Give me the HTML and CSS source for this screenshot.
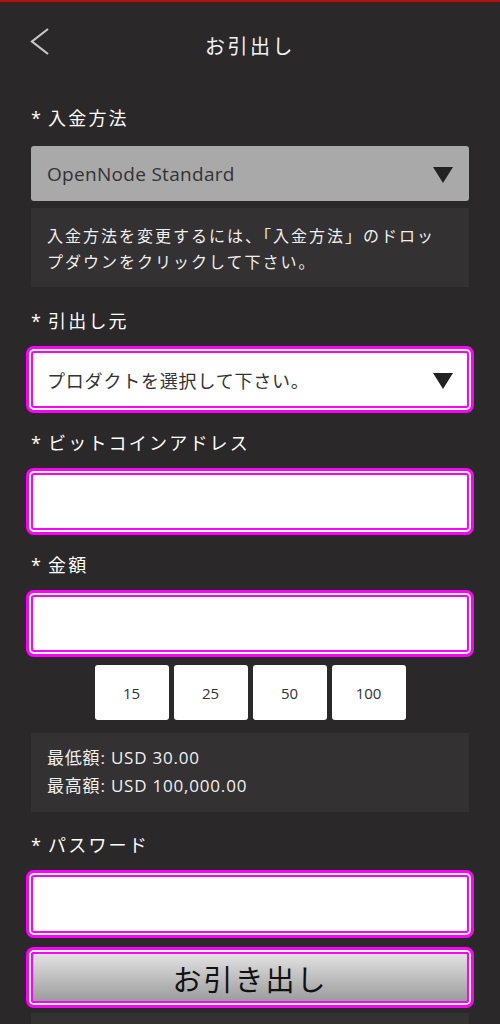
FILE: index.html
```html
<!DOCTYPE html>
<html lang="ja">
<head>
    <meta charset="UTF-8">
    <meta name="viewport" content="width=device-width, initial-scale=1.0">
    <title>お引出し</title>
    <link rel="stylesheet" href="styles.css">
</head>
<body>
    <div class="header">
        <a href="#" class="back">
            <svg width="20" height="28" viewBox="0 0 20 28"><polyline points="18,1 2,13.5 18,26" fill="none" stroke="#c8c8c8" stroke-width="2.2"/></svg>
        </a>
        <div class="title">お引出し</div>
        <div></div>
    </div>

    <div class="form">
        <div class="label">* 入金方法</div>
        <div class="select grey">
            <span>OpenNode Standard</span>
            <svg class="arrow" width="20" height="16" viewBox="0 0 20 16"><polygon points="0,0 20,0 10,16" fill="#222"/></svg>
        </div>
        <div class="note">入金方法を変更するには、「入金方法」のドロップダウンをクリックして下さい。</div>

        <div class="label">* 引出し元</div>
        <div class="field select">
            <span>プロダクトを選択して下さい。</span>
            <svg class="arrow" width="20" height="16" viewBox="0 0 20 16"><polygon points="0,0 20,0 10,16" fill="#222"/></svg>
        </div>

        <div class="label">* ビットコインアドレス</div>
        <input class="field" type="text">

        <div class="label">* 金額</div>
        <input class="field amount" type="text">
        <div class="quick">
            <div class="quick-btn">15</div>
            <div class="quick-btn">25</div>
            <div class="quick-btn">50</div>
            <div class="quick-btn">100</div>
        </div>
        <div class="limits">
            最低額: USD 30.00<br>
            最高額: USD 100,000.00
        </div>

        <div class="label">* パスワード</div>
        <input class="field password" type="password">

        <div class="field submit">お引き出し</div>
        <div class="footer-box"></div>
    </div>
</body>
</html>
```

FILE: styles.css
```css
body {
    margin: 0;
    background-color: #2a2829;
    border-top: 2px solid #b80d0d;
    font-family: "Open Sans", "Noto Sans CJK JP", sans-serif;
    color: #fff;
}
.header {
    height: 86px;
    display: grid;
    grid-template-columns: 1fr auto 1fr;
    align-items: center;
}
.back {
    padding-left: 30px;
    display: flex;
    align-items: center;
    height: 28px;
    margin-top: -6px;
}
.title {
    font-size: 20px;
    letter-spacing: 2.5px;
    color: #f2f2f2;
}
.form {
    padding: 18px 31px 0;
}
.label {
    height: 24px;
    font-size: 18px;
    line-height: 24px;
    letter-spacing: 2.2px;
    word-spacing: -2px;
    margin-bottom: 18px;
}
.field {
    display: block;
    width: 100%;
    height: 57px;
    box-sizing: border-box;
    background: #fff;
    border: 2px solid #ff00ff;
    border-radius: 3px;
    box-shadow: 0 0 0 2px #fff, 0 0 0 5px #ff00ff;
    margin: 0 0 23px;
    outline: none;
    font-family: inherit;
}
.select {
    height: 57px;
    box-sizing: border-box;
    display: flex;
    align-items: center;
    justify-content: space-between;
    padding: 0 14px 0 14px;
    font-size: 18px;
    color: #333;
    letter-spacing: 0.8px;
}
.select.grey {
    height: 55px;
    background: #a9a9a9;
    border-radius: 3px;
    padding: 0 16px;
    font-size: 19px;
    letter-spacing: 0.3px;
    margin-top: -2px;
    margin-bottom: 7px;
}
.arrow {
    margin-top: 2px;
}
.field.amount {
    margin-bottom: 13px;
}
.field.password {
    height: 58px;
    margin-bottom: 19px;
}
.note {
    background: #333132;
    padding: 15px 17px 12px 16px;
    font-size: 16px;
    line-height: 26px;
    letter-spacing: 2px;
    color: #f0f0f0;
    margin-bottom: 22px;
}
.quick {
    display: flex;
    justify-content: center;
    gap: 5px;
    margin-bottom: 13px;
}
.quick-btn {
    width: 74px;
    height: 55px;
    background: #fff;
    border-radius: 3px;
    display: flex;
    align-items: center;
    justify-content: center;
    font-size: 15px;
    color: #333;
}
.limits {
    background: #333132;
    padding: 11px 16px 12px;
    font-size: 17px;
    line-height: 28px;
    letter-spacing: 0.8px;
    color: #f0f0f0;
    margin-bottom: 21px;
}
.submit {
    height: 51px;
    background: linear-gradient(#e2e2e2, #9c9c9c);
    display: flex;
    align-items: center;
    justify-content: center;
    font-size: 29px;
    color: #111;
    letter-spacing: 2px;
    margin-bottom: 10px;
}
.footer-box {
    height: 12px;
    background: #333132;
}
```
